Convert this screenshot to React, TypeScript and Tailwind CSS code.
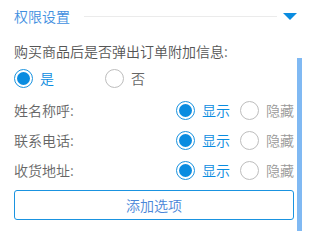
import React from "react";

const fields = ["姓名称呼:", "联系电话:", "收货地址:"];

const Radio: React.FC<{ checked?: boolean }> = ({ checked }) => (
  <span
    className={
      "flex size-[19px] shrink-0 items-center justify-center rounded-full border bg-white " +
      (checked ? "border-[#1a93e0]" : "border-[#bdbdbd]")
    }
  >
    {checked && <span className="size-[13px] rounded-full bg-[#0a8ce0]"></span>}
  </span>
);

const App: React.FC = () => {
  return (
    <div
      className="relative h-[231px] w-[310px] overflow-hidden bg-white font-[350]"
      style={{ fontFamily: '"Noto Sans CJK SC", "Noto Sans", sans-serif' }}
    >
      {/* Header */}
      <div className="flex h-[32px] items-center pl-[14px] pr-[13px]">
        <span className="text-[14px] leading-5 text-[#3f8fdf]">权限设置</span>
        <div className="ml-[14px] mr-[6px] h-px flex-1 bg-[#ebebeb]"></div>
        <svg width="14" height="7" viewBox="0 0 14 7">
          <path d="M0 0 L14 0 L7 7 Z" fill="#0a8ce0" />
        </svg>
      </div>

      <div className="flex flex-col pl-[14px] pr-[16px]">
        <p className="mt-[9px] text-[14px] leading-5 text-[#555]">购买商品后是否弹出订单附加信息:</p>

        <div className="mt-[5px] flex h-[24px] items-center">
          <label className="flex w-[91px] items-center gap-[7px]">
            <Radio checked />
            <span className="text-[14px] text-[#0a8ce0]">是</span>
          </label>
          <label className="flex items-center gap-[7px]">
            <Radio />
            <span className="text-[14px] text-[#666]">否</span>
          </label>
        </div>

        <div className="mt-[5px] flex flex-col">
          {fields.map((f) => (
            <div key={f} className="flex h-[30px] items-center">
              <span className="text-[14px] text-[#666]">{f}</span>
              <div className="ml-auto flex items-center">
                <Radio checked />
                <span className="ml-[7px] text-[14px] text-[#0a8ce0]">显示</span>
                <span className="ml-[10px]">
                  <Radio />
                </span>
                <span className="ml-[7px] text-[14px] text-[#999]">隐藏</span>
              </div>
            </div>
          ))}
        </div>

        <button className="mt-[5px] flex h-[30px] w-full items-center justify-center rounded-[3px] border border-[#1a93e0] bg-white text-[14px] text-[#4a86d8]">
          添加选项
        </button>
      </div>

      {/* scrollbar thumb */}
      <div className="absolute right-[8px] top-[58px] bottom-0 w-[5px] bg-[#80b9f3]"></div>
    </div>
  );
};

export default App;
